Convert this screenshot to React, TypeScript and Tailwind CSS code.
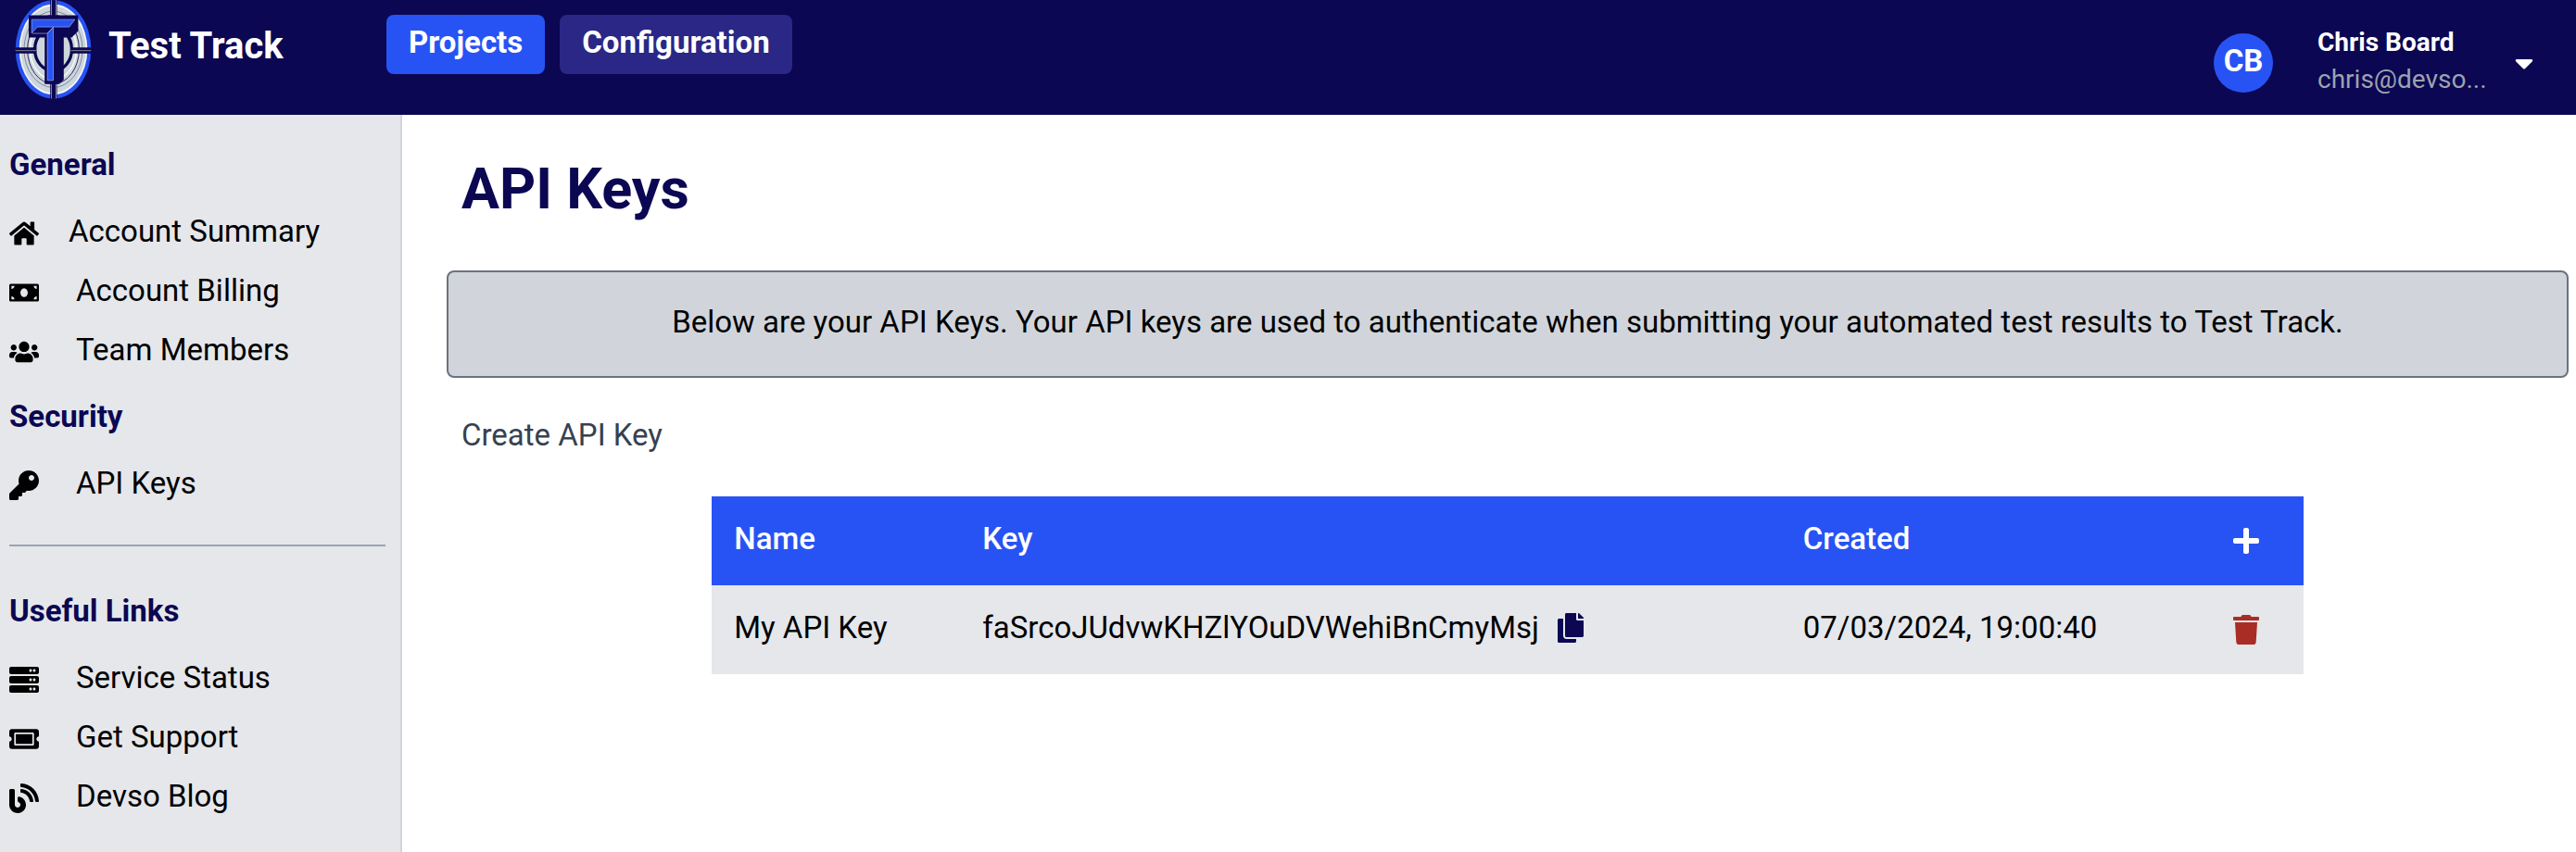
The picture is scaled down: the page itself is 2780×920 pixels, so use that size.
import type { IconType } from 'react-icons';
import {
  FaBlog,
  FaCaretDown,
  FaCopy,
  FaHome,
  FaKey,
  FaMoneyBill,
  FaPlus,
  FaServer,
  FaTicketAlt,
  FaTrash,
  FaUsers,
} from 'react-icons/fa';

type NavItem = { label: string; icon: IconType; tight?: boolean };

const general: NavItem[] = [
  { label: 'Account Summary', icon: FaHome, tight: true },
  { label: 'Account Billing', icon: FaMoneyBill },
  { label: 'Team Members', icon: FaUsers },
];

const security: NavItem[] = [{ label: 'API Keys', icon: FaKey }];

const usefulLinks: NavItem[] = [
  { label: 'Service Status', icon: FaServer },
  { label: 'Get Support', icon: FaTicketAlt },
  { label: 'Devso Blog', icon: FaBlog },
];

const apiKeys = [
  { name: 'My API Key', key: 'faSrcoJUdvwKHZlYOuDVWehiBnCmyMsj', created: '07/03/2024, 19:00:40' },
];

function Logo() {
  return (
    <svg viewBox="48 0 250 321" className="w-[83px] h-[107px] shrink-0" aria-hidden="true">
      <ellipse cx="173" cy="160" rx="123" ry="160" fill="#2853f4" />
      <ellipse cx="173" cy="160" rx="111" ry="147" fill="#f4f7f8" />
      <ellipse cx="173" cy="160" rx="106" ry="141" fill="#cdd6da" />
      <g fill="none">
        <ellipse cx="173" cy="160" rx="95" ry="124" stroke="#5b5b88" strokeWidth="2" />
        <ellipse cx="173" cy="160" rx="84" ry="112" stroke="#2b2a66" strokeWidth="3" />
        <ellipse cx="173" cy="160" rx="75" ry="98" stroke="#f4f7f8" strokeWidth="5" />
        <ellipse cx="173" cy="160" rx="60" ry="70" stroke="#0b0752" strokeWidth="10" />
      </g>
      <path d="M163 0H185V60H163ZM163 262H185V321H163ZM49 154H118V173H49ZM229 154H297V173H229Z" fill="#0b0752" />
      <path
        d="M167 0V50M182 0V50M167 272V320M182 272V320M50 164H117M230 164H296"
        stroke="#8a8494"
        strokeWidth="3"
      />
      <path d="M93 49H254V100L233 121H207V259L192 273H145V121H93Z" fill="#0b0752" />
      <path d="M103 63H243L225 87H121L103 107Z" fill="#2853f4" stroke="#a9b4e6" strokeWidth="2" />
      <path d="M173 88V261H154V108Z" fill="#2853f4" stroke="#a9b4e6" strokeWidth="2" />
      <path d="M105 108H153L173 88" fill="none" stroke="#a9b4e6" strokeWidth="2" />
    </svg>
  );
}

function NavSection({ title, items }: { title: string; items: NavItem[] }) {
  return (
    <section>
      <h2 className="h-20 flex items-center pb-1 font-bold text-[#0b0752]">{title}</h2>
      <ul>
        {items.map(({ label, icon: Icon, tight }) => (
          <li key={label}>
            <a href="#" className={`h-16 flex items-center ${tight ? 'gap-8' : 'gap-10'}`}>
              <Icon className="w-8 h-8 shrink-0" />
              <span className="pb-1">{label}</span>
            </a>
          </li>
        ))}
      </ul>
    </section>
  );
}

function Header() {
  return (
    <header className="h-[124px] flex items-start bg-[#0b0752] text-white">
      <a href="#" className="w-[417px] shrink-0 pl-4 flex items-center gap-[18px]">
        <Logo />
        <span className="text-[40px] leading-[48px] font-bold pb-2">Test Track</span>
      </a>
      <nav className="pt-4 flex gap-4">
        <button type="button" className="h-16 px-6 pb-1 rounded-lg font-bold bg-[#2853f4]">
          Projects
        </button>
        <button type="button" className="h-16 px-6 pb-1 rounded-lg font-bold bg-[#2a2786]">
          Configuration
        </button>
      </nav>
      <button type="button" className="ml-auto h-full pt-3 pr-[46px] flex items-center text-left">
        <span className="w-16 h-16 rounded-full bg-[#2853f4] flex items-center justify-center font-bold pb-1">
          CB
        </span>
        <span className="ml-12 w-[213px] pb-1 flex flex-col text-[28px] leading-10">
          <span className="font-bold">Chris Board</span>
          <span className="text-[#9ca3af]">chris@devso...</span>
        </span>
        <FaCaretDown className="w-5 h-8" />
      </button>
    </header>
  );
}

function KeysTable() {
  return (
    <table className="w-3/4 mx-auto mt-11 table-fixed text-left">
      <thead className="bg-[#2853f4] text-white">
        <tr className="h-24">
          <th className="w-[268px] pl-6 pb-1 font-medium">Name</th>
          <th className="pl-6 pb-1 font-medium">Key</th>
          <th className="w-[464px] pl-6 pb-1 font-medium">Created</th>
          <th className="w-[100px] pl-6">
            <button type="button" aria-label="Create API key" className="block">
              <FaPlus className="w-7 h-8" />
            </button>
          </th>
        </tr>
      </thead>
      <tbody className="bg-[#e5e7eb]">
        {apiKeys.map((row) => (
          <tr key={row.key} className="h-24">
            <td className="pl-6 pb-1">{row.name}</td>
            <td className="pl-6 pb-1">
              <div className="flex items-center gap-5">
                {row.key}
                <button type="button" aria-label="Copy key" className="text-[#0b0752]">
                  <FaCopy className="w-7 h-8" />
                </button>
              </div>
            </td>
            <td className="pl-6 pb-1">{row.created}</td>
            <td className="pl-6">
              <button type="button" aria-label="Delete key" className="block text-[#a92d25]">
                <FaTrash className="w-7 h-8" />
              </button>
            </td>
          </tr>
        ))}
      </tbody>
    </table>
  );
}

export default function App() {
  return (
    <div className="min-h-screen flex flex-col bg-white text-black text-[33px] leading-[48px] font-[Roboto,sans-serif]">
      <Header />
      <div className="flex-1 flex">
        <aside className="w-[434px] shrink-0 pt-4 pl-[10px] pr-4 bg-[#e5e7eb] border-r-2 border-[#d1d5db]">
          <NavSection title="General" items={general} />
          <NavSection title="Security" items={security} />
          <hr className="my-8 border-t-2 border-[#9ca3af]" />
          <NavSection title="Useful Links" items={usefulLinks} />
        </aside>
        <main className="flex-1 pt-11 pl-12 pr-2">
          <h1 className="pl-4 text-[61px] leading-[72px] font-bold text-[#0b0752]">API Keys</h1>
          <p className="mt-[52px] px-6 pt-6 pb-7 leading-[60px] text-center rounded-lg border-2 border-[#6b7280] bg-[#d1d5db]">
            Below are your API Keys. Your API keys are used to authenticate when submitting your automated test
            results to Test Track.
          </p>
          <h2 className="mt-10 pl-4 leading-[44px] text-[#374151]">Create API Key</h2>
          <KeysTable />
        </main>
      </div>
    </div>
  );
}
